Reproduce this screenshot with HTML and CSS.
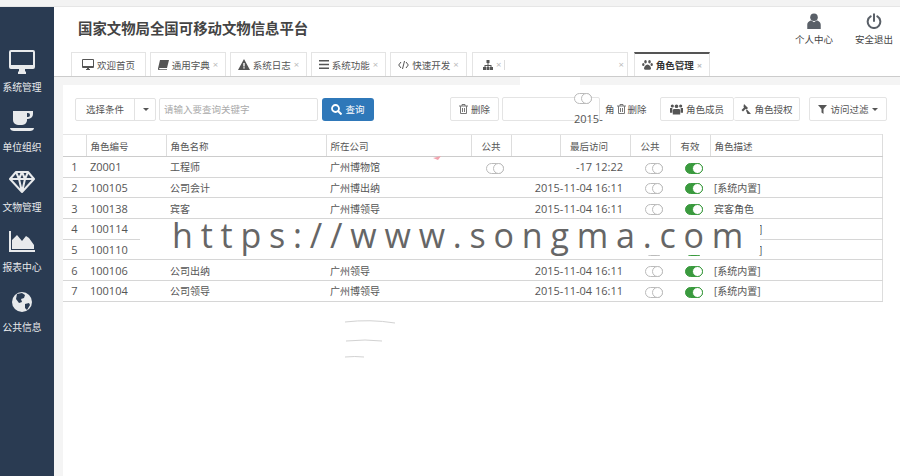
FILE: index.html
```html
<!doctype html>
<html lang="zh-CN">
  <head>
    <meta charset="utf-8" />
    <title>国家文物局全国可移动文物信息平台</title>
    <link rel="stylesheet" href="styles.css">
  </head>
  <body>
    <div class="topbar"></div>
    <div class="layout">
      <div class="sidebar">
        <div class="nav-item">
          <svg width="26" height="24" viewBox="0 0 26 24"><path fill="#e8eaec" fill-rule="evenodd" d="M2 0h22a2 2 0 0 1 2 2v15a2 2 0 0 1-2 2h-8v2l1 1v2H9v-2l1-1v-2H2a2 2 0 0 1-2-2V2a2 2 0 0 1 2-2zm0 2v13h22V2z"/></svg>
          <span>系统管理</span>
        </div>
        <div class="nav-item">
          <svg width="24" height="22" viewBox="0 0 24 22"><path fill="#e8eaec" fill-rule="evenodd" d="M3 0h20v3a5 5 0 0 1-5 5h-1a5 5 0 0 1-5 6H8a5 5 0 0 1-5-5zm14 2v4h1a2 2 0 0 0 0-4zM0 17h24c0 2-2 3-4 3H4c-2 0-4-1-4-3z"/></svg>
          <span>单位组织</span>
        </div>
        <div class="nav-item">
          <svg width="26" height="22" viewBox="0 0 26 22"><path fill="none" stroke="#e8eaec" stroke-width="2" stroke-linejoin="round" d="M7 1h12l6 7-12 13L1 8zM1 8h24M7 1l3 7 3 13 3-13 3-7M10 8l3-7 3 7"/></svg>
          <span>文物管理</span>
        </div>
        <div class="nav-item">
          <svg width="26" height="22" viewBox="0 0 26 22"><path fill="#e8eaec" d="M0 0h2v19h24v2H0zM3 18V9l5-5 5 6 4-5 3 2 5 7v4z"/></svg>
          <span>报表中心</span>
        </div>
        <div class="nav-item">
          <svg width="22" height="22" viewBox="0 0 22 22"><circle cx="11" cy="11" r="10" fill="#e8eaec"/><path fill="#2a3b52" d="M6 3l5-1 3 2-1 3-3 1 1 3-3 1-3-4zM14 13l4-1 1 2-3 5-2-2z"/></svg>
          <span>公共信息</span>
        </div>
      </div>

      <div class="main">
        <div class="header">
          <h1>国家文物局全国可移动文物信息平台</h1>
          <div class="header-links">
            <div class="header-link">
              <svg width="14" height="16" viewBox="0 0 16 19"><circle cx="8" cy="5" r="4.500" fill="#5a6068"/><path fill="#5a6068" d="M0 19v-5c0-3 3-5 5-5l3 2 3-2c2 0 5 2 5 5v5z"/></svg>
              <span>个人中心</span>
            </div>
            <div class="header-link">
              <svg width="16" height="16" viewBox="0 0 18 19"><path fill="none" stroke="#5a6068" stroke-width="2.400" stroke-linecap="round" d="M9 1.500v8M5 4a7.500 7.500 0 1 0 8 0"/></svg>
              <span>安全退出</span>
            </div>
          </div>
        </div>

        <div class="tabs">
          <div class="tab tab-first">
            <svg width="12" height="11" viewBox="0 0 12 11"><path fill="#555" fill-rule="evenodd" d="M1 0h10a1 1 0 0 1 1 1v7a1 1 0 0 1-1 1H7v1h1v1H4v-1h1V9H1a1 1 0 0 1-1-1V1a1 1 0 0 1 1-1zm0 1v6h10V1z"/></svg>
            欢迎首页
          </div>
          <div class="tab tab-dict">
            <svg width="11" height="10" viewBox="0 0 11 10"><path fill="#555" d="M2 0h9L9 8H1.500a.8.8 0 0 0 0 1.200H9V10H1a1 1 0 0 1-1-1.500z"/></svg>
            通用字典<i>×</i>
          </div>
          <div class="tab tab-log">
            <svg width="12" height="11" viewBox="0 0 12 11"><path fill="#555" d="M6 0l6 11H0zM5.300 4v3.500h1.400V4zm0 4.300v1.200h1.400V8.300z" fill-rule="evenodd"/></svg>
            系统日志<i>×</i>
          </div>
          <div class="tab tab-func">
            <svg width="10" height="9" viewBox="0 0 10 9"><path fill="#555" d="M0 0h10v1.500H0zM0 3.700h10v1.500H0zM0 7.400h10V9H0z"/></svg>
            系统功能<i>×</i>
          </div>
          <div class="tab tab-dev">
            <svg width="11" height="8" viewBox="0 0 11 8"><path fill="none" stroke="#555" d="M3 1L.7 4 3 7M8 1l2.300 3L8 7M6.500 0L4.500 8"/></svg>
            快速开发<i>×</i>
          </div>
          <div class="tab tab-org">
            <svg width="10" height="10" viewBox="0 0 10 10"><path fill="#555" d="M3.500 0h3v3h-3zM4.500 3h1v2h3v2h-1V6h-2v1h-1V6h-2v1h-1V5h3zM0 7h3v3H0zM3.500 7h3v3h-3zM7 7h3v3H7z"/></svg>
            <i>×</i><b></b><i class="tab-org-close">×</i>
          </div>
          <div class="tab tab-active">
            <svg width="11" height="10" viewBox="0 0 11 10"><path fill="#555" d="M3.500 0a1.300 1.700 0 1 1 0 3.400 1.300 1.700 0 0 1 0-3.400zM7.500 0a1.300 1.700 0 1 1 0 3.400 1.300 1.700 0 0 1 0-3.400zM1.300 3a1.200 1.500 0 1 1 0 3 1.200 1.500 0 0 1 0-3zM9.700 3a1.200 1.500 0 1 1 0 3 1.200 1.500 0 0 1 0-3zM5.500 4.500c2 0 3.500 2.500 3.500 4s-2 1.200-3.500 1.200S2 10 2 8.500s1.500-4 3.500-4z"/></svg>
            角色管理<i>×</i>
          </div>
        </div>

        <div class="content">
          <div class="panel">
            <div class="toolbar">
              <div class="select-group">
                <span class="select-label">选择条件</span>
                <span class="select-arrow"></span>
              </div>
              <div class="search-input">请输入要查询关键字</div>
              <div class="btn-search">
                <svg width="11" height="11" viewBox="0 0 11 11"><circle cx="4.500" cy="4.500" r="3.500" fill="none" stroke="#fff" stroke-width="1.800"/><path stroke="#fff" stroke-width="2" d="M7 7l3.500 3.500"/></svg>
                查询
              </div>
              <div class="btn btn-delete">
                <svg class="trash" width="9" height="10" viewBox="0 0 9 10"><path fill="none" stroke="#777" d="M0 2h9M3 2V.5h3V2M1.500 2v7.500h6V2M3.500 4v4M5.500 4v4"/></svg>
                删除
              </div>
              <div class="btn btn-blank"></div>
              <div class="role-delete">
                角
                <svg class="trash" width="9" height="10" viewBox="0 0 9 10"><path fill="none" stroke="#777" d="M0 2h9M3 2V.5h3V2M1.500 2v7.500h6V2M3.500 4v4M5.500 4v4"/></svg>
                删除
              </div>
              <div class="btn-group">
                <div class="btn">
                  <svg width="13" height="11" viewBox="0 0 14 11"><path fill="#555" d="M7 0a2 2 0 1 1 0 4 2 2 0 0 1 0-4zM2.500 0a1.700 1.700 0 1 1 0 3.400 1.700 1.700 0 0 1 0-3.400zM11.500 0a1.700 1.700 0 1 1 0 3.400 1.700 1.700 0 0 1 0-3.400zM4 5h6l1 1v5H3V6zM0 4h2.500v5H0zM11.500 4H14v5h-2.500z"/></svg>
                  角色成员
                </div>
                <div class="btn">
                  <svg width="11" height="10" viewBox="0 0 11 10"><path fill="#555" d="M4 0l4 4-1.500 1.500-1-.5L3 7.500 1.500 6 4 3.500l-.5-1zM6 6.500L7 5.500l4 4.500H7.500z"/></svg>
                  角色授权
                </div>
              </div>
              <div class="btn btn-filter">
                <svg width="9" height="9" viewBox="0 0 9 9"><path fill="#555" d="M0 0h9L5.500 4v5l-2-1.500V4z"/></svg>
                访问过滤
                <span class="caret"></span>
              </div>
            </div>

            <table class="grid">
              <colgroup>
                <col class="c-num"><col class="c-code"><col class="c-name"><col class="c-org"><col class="c-pub">
                <col class="c-gap"><col class="c-time"><col class="c-flag"><col class="c-flag"><col class="c-desc">
              </colgroup>
              <thead>
                <tr>
                  <th></th><th>角色编号</th><th>角色名称</th><th>所在公司</th><th class="center">公共</th>
                  <th></th><th class="center head-time">最后访问</th><th class="center">公共</th><th class="center">有效</th><th>角色描述</th>
                </tr>
              </thead>
              <tbody>
                <tr>
                  <td class="center num">1</td><td class="num">Z0001</td><td>工程师</td><td>广州博物馆</td>
                  <td class="center pub"><span class="toggle"></span></td>
                  <td colspan="2" class="time">-17 12:22</td>
                  <td class="flag"><span class="toggle"></span></td>
                  <td class="flag"><span class="toggle toggle-on"></span></td><td></td>
                </tr>
                <tr>
                  <td class="center num">2</td><td class="num">100105</td><td>公司会计</td><td>广州博出纳</td><td></td>
                  <td colspan="2" class="time">2015-11-04 16:11</td>
                  <td class="flag"><span class="toggle"></span></td>
                  <td class="flag"><span class="toggle toggle-on"></span></td><td>[系统内置]</td>
                </tr>
                <tr>
                  <td class="center num">3</td><td class="num">100138</td><td>宾客</td><td>广州博领导</td><td></td>
                  <td colspan="2" class="time">2015-11-04 16:11</td>
                  <td class="flag"><span class="toggle"></span></td>
                  <td class="flag"><span class="toggle toggle-on"></span></td><td>宾客角色</td>
                </tr>
                <tr>
                  <td class="center num">4</td><td class="num">100114</td><td></td><td></td><td></td>
                  <td colspan="2" class="time"></td>
                  <td class="flag"></td><td class="flag"></td><td class="bracket">]</td>
                </tr>
                <tr>
                  <td class="center num">5</td><td class="num">100110</td><td></td><td></td><td></td>
                  <td colspan="2" class="time"></td>
                  <td class="flag"><span class="toggle"></span></td>
                  <td class="flag"><span class="toggle toggle-on"></span></td><td class="bracket">]</td>
                </tr>
                <tr>
                  <td class="center num">6</td><td class="num">100106</td><td>公司出纳</td><td>广州领导</td><td></td>
                  <td colspan="2" class="time">2015-11-04 16:11</td>
                  <td class="flag"><span class="toggle"></span></td>
                  <td class="flag"><span class="toggle toggle-on"></span></td><td>[系统内置]</td>
                </tr>
                <tr>
                  <td class="center num">7</td><td class="num">100104</td><td>公司领导</td><td>广州博领导</td><td></td>
                  <td colspan="2" class="time">2015-11-04 16:11</td>
                  <td class="flag"><span class="toggle"></span></td>
                  <td class="flag"><span class="toggle toggle-on"></span></td><td>[系统内置]</td>
                </tr>
              </tbody>
            </table>
          </div>
        </div>
      </div>
    </div>

    <!-- watermark and the erased patches over the screenshot -->
    <div class="patch patch-tab"></div>
    <div class="patch patch-head"></div>
    <div class="float-toggle"><span class="toggle"></span></div>
    <div class="float-year">2015-</div>
    <div class="patch patch-mark"></div>
    <div class="watermark">https://www.songma.com</div>
    <svg class="scratches" width="900" height="476" viewBox="0 0 900 476">
      <path fill="none" stroke="#d2d2d2" d="M345 322q25-3 50 1M346 341q20-2 36 0M345 357q10-1 19 0"/>
      <path fill="#f2a3ae" d="M433 158l8-2-3 4z"/>
    </svg>
  </body>
</html>
```

FILE: styles.css
```css
/* body tags */
html, body { height: 100%; }
body {
    background: #fff;
    color: #555;
    font-family: "Open Sans", "Noto Sans CJK SC", sans-serif;
    font-size: 9.500px;
    height: 476px;
    margin: 0;
    overflow: hidden;
    position: relative;
    width: 900px;
}
h1 {
    color: #444;
    font-size: 14.400px;
    font-weight: bold;
    margin: 0;
}
/* frame */
.topbar {
    background: #f3f3f3;
    border-bottom: 1px solid #e6e6e6;
    height: 6px;
}
.layout {
    display: flex;
    height: 469px;
}
.sidebar {
    background: #2a3b52;
    box-sizing: border-box;
    padding: 41px 10px 0 0;
    width: 54px;
}
.nav-item {
    align-items: center;
    color: #e8eaec;
    display: flex;
    flex-direction: column;
    font-size: 9.800px;
    height: 60px;
    justify-content: flex-start;
    white-space: nowrap;
}
.nav-item svg { height: 24px; margin-top: 2px; }
.nav-item span { margin-top: 7px; line-height: 14px; }
.main {
    display: flex;
    flex: 1;
    flex-direction: column;
    min-width: 0;
}
/* header */
.header {
    align-items: flex-start;
    display: flex;
    height: 45px;
    justify-content: space-between;
    padding: 0 6px 0 24px;
}
.header h1 { margin-top: 12px; line-height: 20px; }
.header-links { display: flex; gap: 20px; margin-top: 6px; }
.header-link {
    align-items: center;
    color: #444;
    display: flex;
    flex-direction: column;
    gap: 3px;
    width: 40px;
}
/* tabs */
.tabs {
    border-bottom: 1px solid #ccc;
    box-sizing: border-box;
    display: flex;
    gap: 4px;
    height: 25px;
    padding-left: 17px;
}
.tab {
    align-items: center;
    border: 1px solid #e4e4e4;
    border-bottom: 0;
    box-sizing: border-box;
    color: #555;
    display: flex;
    gap: 3px;
    height: 24px;
    justify-content: center;
}
.tab i { color: #bbb; font-style: normal; }
.tab-first { width: 75px; }
.tab-dict { width: 76px; }
.tab-log { width: 77px; }
.tab-func { width: 75px; }
.tab-dev { width: 77px; }
.tab-org {
    justify-content: flex-start;
    margin-left: 1px;
    padding-left: 10px;
    width: 156px;
}
.tab-org b { border-left: 1px solid #ddd; height: 10px; }
.tab-org-close { margin-left: auto; margin-right: 3px; }
.tab-active {
    border-top: 2px solid #555;
    color: #333;
    font-weight: bold;
    margin-left: 2px;
    width: 76px;
}
/* content */
.content {
    background: #f4f4f4;
    flex: 1;
    padding: 8px 0 0 9px;
}
.panel {
    background: #fff;
    height: 100%;
}
.toolbar {
    align-items: center;
    box-sizing: border-box;
    display: flex;
    height: 49px;
    padding: 0 0 1px 12px;
}
.select-group {
    border: 1px solid #e2e2e2;
    border-radius: 2px;
    box-sizing: border-box;
    display: flex;
    height: 23px;
    width: 81px;
}
.select-label {
    border-right: 1px solid #e2e2e2;
    line-height: 21px;
    text-align: center;
    width: 58px;
}
.select-arrow {
    align-self: center;
    border-left: 3px solid transparent;
    border-right: 3px solid transparent;
    border-top: 3px solid #555;
    margin-left: 8px;
}
.search-input {
    border: 1px solid #e2e2e2;
    border-radius: 2px;
    box-sizing: border-box;
    color: #aaa;
    height: 23px;
    line-height: 21px;
    margin-left: 3px;
    padding-left: 4px;
    width: 159px;
}
.btn-search {
    align-items: center;
    background: #2f78b9;
    border-radius: 3px;
    color: #fff;
    display: flex;
    gap: 3px;
    height: 23px;
    justify-content: center;
    margin-left: 4px;
    width: 52px;
}
.btn {
    align-items: center;
    background: #fff;
    border: 1px solid #e4e4e4;
    border-radius: 2px;
    box-sizing: border-box;
    display: flex;
    gap: 3px;
    height: 24px;
    justify-content: center;
}
.btn-delete { margin-left: 76px; width: 49px; }
.btn-blank { margin-left: 3px; width: 98px; }
.role-delete {
    align-items: center;
    display: flex;
    gap: 2px;
    margin-left: 5px;
    width: 55px;
}
.btn-group { display: flex; }
.btn-group .btn { width: 74px; }
.btn-group .btn + .btn { border-left: 0; width: 66px; }
.btn-filter { margin-left: 9px; width: 78px; }
.caret {
    border-left: 3px solid transparent;
    border-right: 3px solid transparent;
    border-top: 3px solid #555;
}
/* table */
.grid {
    border-collapse: collapse;
    table-layout: fixed;
    width: 820px;
}
.c-num { width: 23px; }
.c-code { width: 80px; }
.c-name { width: 160px; }
.c-org { width: 145px; }
.c-pub { width: 40px; }
.c-gap { width: 49px; }
.c-time { width: 70px; }
.c-flag { width: 40px; }
.grid th {
    border-bottom: 1px solid #ccc;
    border-left: 1px solid #ddd;
    border-top: 1px solid #e4e4e4;
    font-weight: normal;
    height: 21px;
    padding: 0 0 0 4px;
    text-align: left;
}
.grid th:first-child { border-left: 0; }
.grid th:last-child { border-right: 1px solid #ddd; }
.grid td {
    border-bottom: 1px solid #d6d6d6;
    font-size: 10px;
    height: 19.700px;
    padding: 0 0 0 4px;
    white-space: nowrap;
}
.grid td:last-child { border-right: 1px solid #ddd; }
.grid th.center, .grid td.center { padding: 0; text-align: center; }
.grid th.head-time { padding-right: 12px; }
.grid td.num { font-size: 11px; }
.grid td.pub { padding-left: 8px; }
.grid td.flag { padding: 0 0 0 7px; text-align: center; }
.grid td.time { font-size: 11px; padding: 0 7px 0 0; text-align: right; }
.grid td.bracket { padding-left: 49px; }
.toggle {
    background: #fff;
    border: 1px solid #bbb;
    border-radius: 6px;
    box-sizing: border-box;
    display: inline-block;
    height: 11px;
    position: relative;
    vertical-align: middle;
    width: 18px;
}
.toggle:after {
    background: #fff;
    border: 1px solid #bbb;
    border-radius: 50%;
    box-sizing: border-box;
    content: "";
    height: 11px;
    position: absolute;
    right: -1px;
    top: -1px;
    width: 11px;
}
.toggle-on { background: #3a9a3e; border-color: #3a9a3e; }
.toggle-on:after { border-color: #3a9a3e; }
/* overlays */
.patch { background: #fff; position: absolute; }
.patch-tab { height: 8px; left: 520px; top: 77px; width: 60px; }
.patch-head { height: 4px; left: 513px; top: 130px; width: 46px; }
.patch-mark { height: 36px; left: 140px; top: 219px; width: 620px; }
.float-toggle { left: 574px; position: absolute; top: 91px; }
.float-year { font-size: 11px; left: 574px; position: absolute; top: 111px; }
.watermark {
    color: #666;
    font-family: "Open Sans", sans-serif;
    font-size: 34px;
    left: 172px;
    letter-spacing: 7.800px;
    line-height: 36px;
    position: absolute;
    top: 217px;
    white-space: nowrap;
}
.scratches { left: 0; pointer-events: none; position: absolute; top: 0; }
```
